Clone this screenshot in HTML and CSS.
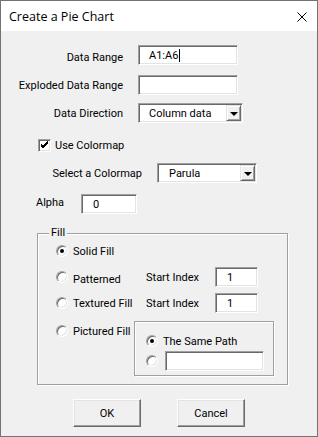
FILE: index.html
```html
<!DOCTYPE html>
<html lang="en">
  <head>
    <meta charset="UTF-8" />
    <title>Create a Pie Chart</title>
    <link rel="stylesheet" href="styles.css">
  </head>
  <body>
    <div class="window">
      <div class="titlebar">
        <span class="title">Create a Pie Chart</span>
        <svg class="close" width="10" height="10" viewBox="0 0 10 10">
          <path d="M0.5 0.5 L9.5 9.5 M9.5 0.5 L0.5 9.5" stroke="#000" stroke-width="1" fill="none" />
        </svg>
      </div>

      <div class="content">
        <div class="field-row first">
          <span class="label label-low">Data Range</span>
          <div class="textbox wide">A1:A6<span class="caret"></span></div>
        </div>
        <div class="field-row second">
          <span class="label">Exploded Data Range</span>
          <div class="textbox wide"></div>
        </div>
        <div class="field-row third">
          <span class="label">Data Direction</span>
          <div class="combo direction">
            <span class="combo-text">Column data</span>
            <span class="drop"><span class="arrow"></span></span>
          </div>
        </div>

        <div class="check-row">
          <span class="checkbox">
            <svg width="9" height="9" viewBox="0 0 9 9">
              <path d="M1 4 L3 6 L8 1 M1 5 L3 7 L8 2 M1 3 L3 5 L8 0" stroke="#000" stroke-width="1" fill="none" />
            </svg>
          </span>
          <span>Use Colormap</span>
        </div>

        <div class="colormap-row">
          <span class="label">Select a Colormap</span>
          <div class="combo colormap">
            <span class="combo-text">Parula</span>
            <span class="drop"><span class="arrow"></span></span>
          </div>
        </div>

        <div class="alpha-row">
          <span class="alpha-label">Alpha</span>
          <div class="textbox alpha">0</div>
        </div>

        <div class="group">
          <span class="legend">Fill</span>
          <div class="fill-row">
            <span class="option"><span class="radio on"></span>Solid Fill</span>
          </div>
          <div class="fill-row">
            <span class="option"><span class="radio"></span><span class="low">Patterned</span></span>
            <span class="index-label">Start Index</span>
            <div class="textbox index">1</div>
          </div>
          <div class="fill-row">
            <span class="option"><span class="radio"></span>Textured Fill</span>
            <span class="index-label">Start Index</span>
            <div class="textbox index">1</div>
          </div>
          <div class="fill-row pictured">
            <span class="option narrow"><span class="radio"></span>Pictured Fill</span>
            <div class="path-box">
              <div class="path-row">
                <span class="radio on"></span>The Same Path
              </div>
              <div class="path-row">
                <span class="radio"></span>
                <div class="textbox path"></div>
              </div>
            </div>
          </div>
        </div>

        <div class="buttons">
          <div class="button">OK</div>
          <div class="button">Cancel</div>
        </div>
      </div>
    </div>
  </body>
</html>
```

FILE: styles.css
```css
body {
  margin: 0;
  font-family: Roboto, "Liberation Sans", Arial, sans-serif;
  font-size: 11px;
  color: #000;
}
.window {
  width: 318px;
  height: 437px;
  box-sizing: border-box;
  border: 1px solid #737373;
  background: #f0f0f0;
}
.titlebar {
  height: 30px;
  background: #fff;
  display: flex;
  align-items: center;
  justify-content: space-between;
  padding: 0 10px 0 8px;
}
.title {
  font-family: "Open Sans", sans-serif;
  font-size: 12.5px;
}
.close {
  display: block;
  margin-top: 1px;
}
.content {
  display: flex;
  flex-direction: column;
}

/* sunken 3d edit box */
.textbox {
  box-sizing: border-box;
  height: 20px;
  background: #fff;
  border: 1px solid;
  border-color: #a0a0a0 #fff #fff #a0a0a0;
  box-shadow: inset 1px 1px 0 #696969, inset -1px -1px 0 #e3e3e3;
  padding-left: 10px;
  display: flex;
  align-items: center;
}
.caret {
  width: 1px;
  height: 13px;
  background: #000;
  margin-left: 1px;
}
.field-row {
  display: flex;
  align-items: center;
  height: 20px;
}
.field-row.first {
  margin-top: 14px;
}
.field-row.second {
  margin-top: 10px;
}
.field-row.third {
  margin-top: 8px;
}
.field-row .label {
  width: 122px;
  text-align: right;
  margin-right: 15px;
}
.label-low {
  padding-top: 5px;
}
.wide {
  width: 100px;
}

.combo {
  box-sizing: border-box;
  height: 20px;
  background: #fff;
  border: 1px solid;
  border-color: #a0a0a0 #fff #fff #a0a0a0;
  box-shadow: inset 1px 1px 0 #696969, inset -1px -1px 0 #e3e3e3;
  display: flex;
  align-items: center;
  padding: 1px;
}
.combo-text {
  flex: 1;
  padding-left: 9px;
}
.direction {
  width: 105px;
}
.colormap {
  width: 100px;
}
.colormap .combo-text {
  padding-left: 10px;
}
.drop {
  box-sizing: border-box;
  width: 15px;
  height: 16px;
  background: #f0f0f0;
  border: 1px solid;
  border-color: #e3e3e3 #696969 #696969 #e3e3e3;
  box-shadow: inset 1px 1px 0 #fff, inset -1px -1px 0 #a0a0a0;
  display: flex;
  align-items: center;
  justify-content: center;
}
.arrow {
  width: 0;
  height: 0;
  border-left: 4px solid transparent;
  border-right: 4px solid transparent;
  border-top: 4px solid #000;
  margin-top: 1px;
}

.check-row {
  display: flex;
  align-items: center;
  gap: 4px;
  margin: 16px 0 0 37px;
  height: 13px;
}
.checkbox {
  box-sizing: border-box;
  width: 13px;
  height: 13px;
  background: #fff;
  border: 1px solid;
  border-color: #a0a0a0 #fff #fff #a0a0a0;
  box-shadow: inset 1px 1px 0 #696969, inset -1px -1px 0 #e3e3e3;
  display: flex;
  align-items: center;
  justify-content: center;
}
.checkbox svg {
  display: block;
}

.colormap-row {
  display: flex;
  align-items: center;
  height: 20px;
  margin-top: 11px;
}
.colormap-row .label {
  width: 141px;
  text-align: right;
  margin-right: 15px;
}

.alpha-row {
  display: flex;
  align-items: center;
  height: 20px;
  margin: 11px 0 0 35px;
}
.alpha-label {
  width: 45px;
  margin-bottom: 4px;
}
.alpha {
  width: 56px;
  padding-left: 11px;
}

/* etched group box */
.group {
  position: relative;
  box-sizing: border-box;
  width: 251px;
  height: 152px;
  margin: 19px 0 0 36px;
  border: 1px solid #a0a0a0;
  box-shadow: 1px 1px 0 #fff, inset 1px 1px 0 #fff;
  padding: 7px 0 0 18px;
  display: flex;
  flex-direction: column;
}
.legend {
  position: absolute;
  top: -8px;
  left: 11px;
  padding: 0 2px;
  background: #f0f0f0;
}
.fill-row {
  display: flex;
  align-items: center;
  height: 20px;
  margin-bottom: 6px;
}
.fill-row + .fill-row + .fill-row {
  margin-bottom: 8px;
}
.fill-row.pictured {
  align-items: flex-start;
  height: auto;
  margin: 0;
}
.option {
  width: 90px;
  height: 20px;
  display: flex;
  align-items: center;
  gap: 5px;
}
.option.narrow {
  width: 78px;
}
.low {
  padding-top: 5px;
}
.radio {
  box-sizing: border-box;
  width: 12px;
  height: 12px;
  border-radius: 50%;
  background: #fff;
  border: 1px solid;
  border-color: #a0a0a0 #fff #fff #a0a0a0;
  box-shadow: inset 1px 1px 0 #696969, inset -1px -1px 0 #e3e3e3;
  display: flex;
  align-items: center;
  justify-content: center;
  flex: none;
}
.radio.on::after {
  content: "";
  width: 4px;
  height: 4px;
  border-radius: 50%;
  background: #000;
}
.index-label {
  width: 69px;
}
.index {
  width: 43px;
  padding-left: 11px;
}
.path-box {
  box-sizing: border-box;
  width: 140px;
  height: 55px;
  border: 1px solid #a0a0a0;
  box-shadow: 1px 1px 0 #fff, inset 1px 1px 0 #fff;
  padding: 9px 0 0 11px;
}
.path-row {
  display: flex;
  align-items: center;
  height: 20px;
  gap: 5px;
}
.path-row .path {
  width: 99px;
  margin-left: 2px;
}

.buttons {
  display: flex;
  gap: 36px;
  margin: 14px 0 0 72px;
}
.button {
  box-sizing: border-box;
  width: 68px;
  height: 28px;
  background: #f0f0f0;
  border: 1px solid;
  border-color: #fff #696969 #696969 #fff;
  box-shadow: inset -1px -1px 0 #a0a0a0, inset 1px 1px 0 #e3e3e3;
  display: flex;
  align-items: center;
  justify-content: center;
}
```
